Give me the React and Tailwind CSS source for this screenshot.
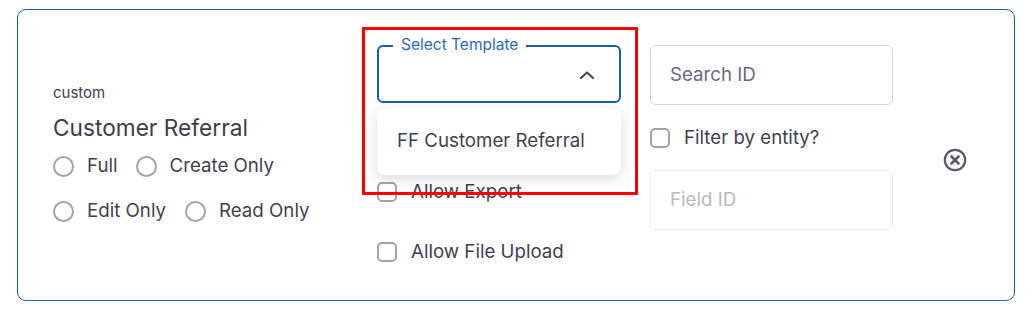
import React from "react";

const font = { fontFamily: "Inter, 'Noto Sans', sans-serif" };

function Radio({ label }) {
  return (
    <div className="flex items-center h-[24px]">
      <span className="w-[21px] h-[21px] rounded-full border-2 border-[#a3a3ab] box-border shrink-0" />
      <span className="ml-[13px] text-[18.7px] leading-[24px] text-[#3f3f50]">{label}</span>
    </div>
  );
}

function Check({ label }) {
  return (
    <div className="flex items-center h-[24px]">
      <span className="w-[20px] h-[20px] rounded-[5px] border-2 border-[#a3a3ab] box-border shrink-0" />
      {label ? (
        <span className="ml-[14px] text-[18.7px] leading-[24px] text-[#3f3f50]">{label}</span>
      ) : null}
    </div>
  );
}

export default function App() {
  return (
    <div className="w-[1033px] h-[316px] bg-white pt-[9px] pl-[17px]" style={font}>
      <div className="relative w-[998px] h-[292px] border border-[#1d5fa6] rounded-[9px] flex items-start pl-[35px]">
        {/* Left column */}
        <div className="w-[324px] mt-[73px] flex flex-col">
          <div className="text-[15px] leading-[20px] text-[#3f3f50]">custom</div>
          <div className="mt-[11px] text-[22.7px] leading-[28px] text-[#3d3d4d]">Customer Referral</div>
          <div className="mt-[12px] flex items-center gap-[18px]">
            <Radio label="Full" />
            <Radio label="Create Only" />
          </div>
          <div className="mt-[21px] flex items-center gap-[19px]">
            <Radio label="Edit Only" />
            <Radio label="Read Only" />
          </div>
        </div>

        {/* Middle column */}
        <div className="w-[244px] mt-[35px] flex flex-col">
          <div className="relative h-[58px] border-2 border-[#1d5fa6] rounded-[6px] flex items-center justify-end pr-[24px]">
            <span className="absolute left-[14px] -top-[11px] bg-white px-[8px] text-[15.5px] leading-[18px] text-[#2c6cb5]">
              Select Template
            </span>
            <svg width="16" height="10" viewBox="0 0 16 10" className="mt-[2px]">
              <path d="M2 8 L8 2.5 L14 8" fill="none" stroke="#474757" strokeWidth="2.2" strokeLinecap="round" strokeLinejoin="round" />
            </svg>
          </div>
          <div className="mt-[17px] flex flex-col gap-[36px]">
            <Check />
            <Check label="Allow Export" />
            <Check label="Allow File Upload" />
          </div>
        </div>

        {/* Right column */}
        <div className="w-[243px] ml-[29px] mt-[35px] flex flex-col">
          <div className="h-[60px] border border-[#d6d6dc] rounded-[6px] flex items-center pl-[19px] text-[18.7px] text-[#6b6b7a]">
            Search ID
          </div>
          <div className="mt-[21px]">
            <Check label="Filter by entity?" />
          </div>
          <div className="mt-[20px] h-[60px] border border-[#ececef] rounded-[6px] flex items-center pl-[19px] text-[18.7px] text-[#b9b9c2]">
            Field ID
          </div>
        </div>

        {/* Remove icon */}
        <div className="ml-[50px] mt-[138px]">
          <svg width="24" height="24" viewBox="0 0 24 24">
            <circle cx="12" cy="12" r="10.2" fill="none" stroke="#585866" strokeWidth="2.2" />
            <path d="M8.5 8.5 L15.5 15.5 M15.5 8.5 L8.5 15.5" stroke="#585866" strokeWidth="2.6" strokeLinecap="round" />
          </svg>
        </div>

        {/* Dropdown menu */}
        <div className="absolute left-[359px] top-[98px] w-[244px] h-[67px] bg-white rounded-[8px] shadow-[0_4px_14px_rgba(0,0,0,0.14)] flex items-center pl-[20px] text-[18.7px] text-[#3f3f50]">
          FF Customer Referral
        </div>

        {/* Highlight box */}
        <div className="absolute left-[344px] top-[17px] w-[276px] h-[168px] border-[3px] border-[#ff0000] pointer-events-none" />
      </div>
    </div>
  );
}
